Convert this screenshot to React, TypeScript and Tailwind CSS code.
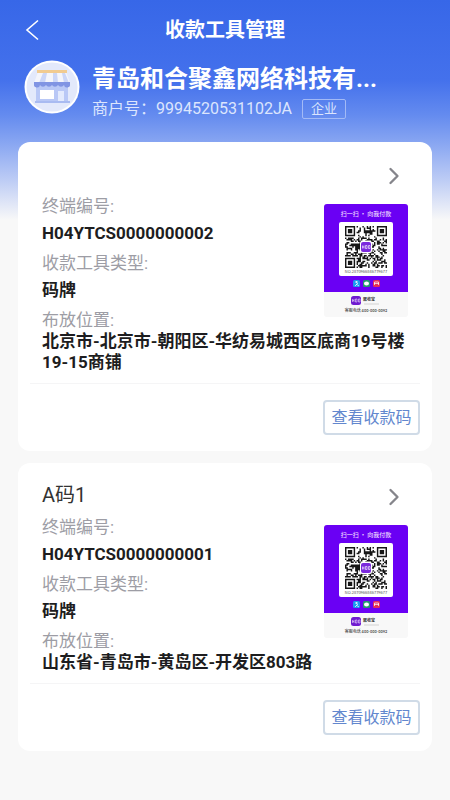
import { ChevronRight } from "lucide-react";

interface Tool {
  name: string;
  terminalNo: string;
  type: string;
  location: string;
}

const tools: Tool[] = [
  {
    name: "",
    terminalNo: "H04YTCS0000000002",
    type: "码牌",
    location: "北京市-北京市-朝阳区-华纺易城西区底商19号楼19-15商铺",
  },
  {
    name: "A码1",
    terminalNo: "H04YTCS0000000001",
    type: "码牌",
    location: "山东省-青岛市-黄岛区-开发区803路",
  },
];

const QR_SIZE = 29;

const finderAt = (x: number, y: number, left: number, top: number) => {
  const dx = x - left;
  const dy = y - top;
  if (dx < -1 || dy < -1 || dx > 7 || dy > 7) return null;
  const ring = Math.max(Math.abs(dx - 3), Math.abs(dy - 3));
  return ring === 3 || ring <= 1;
};

const isDark = (x: number, y: number) => {
  const finder =
    finderAt(x, y, 0, 0) ??
    finderAt(x, y, QR_SIZE - 7, 0) ??
    finderAt(x, y, 0, QR_SIZE - 7);
  if (finder !== null) return finder;
  const n = Math.sin(x * 12.9898 + y * 78.233) * 43758.5453;
  return n - Math.floor(n) < 0.52;
};

const qrPath = Array.from({ length: QR_SIZE * QR_SIZE }, (_, i) => {
  const x = i % QR_SIZE;
  const y = Math.floor(i / QR_SIZE);
  return isDark(x, y) ? `M${x} ${y}h1v1h-1z` : "";
}).join("");

function ShopLogo() {
  return (
    <svg viewBox="0 0 56 54" className="h-[54px] w-14 shrink-0" aria-hidden="true">
      <ellipse cx="28" cy="27" rx="27.5" ry="26.5" fill="#ffffff" />
      <ellipse cx="28" cy="27" rx="25.5" ry="24.5" fill="#e3e9fb" />
      <rect x="12" y="24" width="32" height="18" fill="#b9c8f6" />
      <rect x="11" y="41" width="35" height="2" fill="#a9bbf1" />
      <rect x="16" y="30" width="14" height="9" fill="#ffffff" />
      <rect x="34" y="31" width="6" height="10" fill="#e3eafd" />
      <path d="M14 12h28l4 11H10z" fill="#f4f5fb" />
      <path d="M19 13h4l-2 10h-6zM29 13h4l1 10h-5zM38 13h3l4 10h-5z" fill="#cbd6f8" />
      <path d="M13 10h30v3H13z" fill="#f1cb91" />
      <path
        d="M10 22h36v2a3 3 0 0 1-6 1 3.5 3.5 0 0 1-6 0 3.5 3.5 0 0 1-6 0 3.5 3.5 0 0 1-6 0 3.5 3.5 0 0 1-6 0 3 3 0 0 1-6-1z"
        fill="#8094e3"
      />
    </svg>
  );
}

function Poster() {
  return (
    <svg
      viewBox="0 0 84 113"
      className="mt-2.5 h-[113px] w-[84px] shrink-0 font-['Noto_Sans_CJK_SC',sans-serif]"
      role="img"
      aria-label="收款码"
    >
      <rect width="84" height="113" rx="3" fill="#f8f8f8" />
      <path d="M3 0h78a3 3 0 0 1 3 3v85H0V3a3 3 0 0 1 3-3z" fill="#6a00f4" />
      <text x="42" y="12" textAnchor="middle" fontSize="6" fontWeight="500" fill="#ecdcff">
        扫一扫 · 向我付款
      </text>
      <rect x="15" y="18" width="54" height="54" rx="2" fill="#ffffff" />
      <g transform="translate(21 22) scale(1.448)">
        <path d={qrPath} fill="#161616" />
      </g>
      <rect x="36" y="37" width="12" height="12" rx="2" fill="#ffffff" />
      <rect x="37" y="38" width="10" height="10" rx="2" fill="#7a28dd" />
      <path
        d="M38.5 41.5v3M38.5 43h1.500M40 41.500v3M41.500 41.500v3h1.500v-3h-1.500M44.500 41.500v3h1.500v-3h-1.500"
        stroke="#ffffff"
        strokeWidth="0.6"
        fill="none"
      />
      <text x="42" y="69" textAnchor="middle" fontSize="4" fill="#555555">
        NO.2870966846779677
      </text>
      <rect x="29" y="76" width="7" height="7" rx="1.5" fill="#1a9bf0" />
      <path d="M31 78h3M32.5 77v2M31 82l3-3M32 80l3 2" stroke="#ffffff" strokeWidth="0.7" />
      <rect x="39" y="76" width="7" height="7" rx="1.5" fill="#249a6e" />
      <ellipse cx="42.5" cy="79.5" rx="2.5" ry="2" fill="#ffffff" />
      <rect x="49" y="76" width="7" height="7" rx="1.5" fill="#e52f56" />
      <path d="M50.5 81v-3h4v3M50 79.5h5" stroke="#ffffff" strokeWidth="0.7" fill="none" />
      <rect x="27" y="92" width="10" height="9" rx="2.5" fill="#6f1bd0" />
      <path
        d="M28.5 95v3M28.5 96.5h1.5M30 95v3M31.5 95v3h1.5v-3h-1.5M34.5 95v3h1.500v-3h-1.500"
        stroke="#e9dcfb"
        strokeWidth="0.6"
        fill="none"
      />
      <text x="39" y="97" fontSize="4" fontWeight="700" fill="#333333">
        聚收宝
      </text>
      <path d="M40 100h15" stroke="#c8c8c8" strokeWidth="0.8" />
      <text x="42" y="108" textAnchor="middle" fontSize="4" fontWeight="500" fill="#444444">
        客服电话 400-000-0092
      </text>
    </svg>
  );
}

function ToolCard({ tool }: { tool: Tool }) {
  return (
    <section className="rounded-xl bg-white pt-[18px] pb-4">
      <div className="flex h-[34px] items-start justify-between px-6">
        <h2 className="text-xl leading-7 text-[#333333]">{tool.name}</h2>
        <button type="button" aria-label="详情" className="pt-0.5">
          <ChevronRight className="size-7 text-[#85858b]" strokeWidth={2} />
        </button>
      </div>
      <div className="flex items-start justify-between px-6">
        <dl className="text-[17px] text-[#9d9da5] [&>dd]:font-bold [&>dd]:text-[#1d1d20]">
          <dt className="leading-[25px]">终端编号:</dt>
          <dd className="mb-1 leading-7">{tool.terminalNo}</dd>
          <dt className="leading-[25px]">收款工具类型:</dt>
          <dd className="mb-1 leading-7">{tool.type}</dd>
          <dt className="h-[23px] leading-[25px]">布放位置:</dt>
        </dl>
        <Poster />
      </div>
      <p className="px-6 text-[17px] leading-[21px] font-bold text-[#1d1d20]">{tool.location}</p>
      <div className="mx-3 mt-2.5 flex justify-end border-t border-[#f5f5f6] pt-4">
        <button
          type="button"
          className="h-[35px] w-[97px] rounded border-2 border-[#d0dbe7] text-base text-[#6287ce]"
        >
          查看收款码
        </button>
      </div>
    </section>
  );
}

export default function App() {
  return (
    <div className="min-h-screen bg-[#f8f8f8] font-[Roboto,'Noto_Sans_CJK_SC',sans-serif]">
      <div className="bg-[linear-gradient(#3767e8_0px,#4471ec_80px,#648bef_115px,#8ba8f2_145px,#bdccf5_180px,#f8f8f8_220px)] bg-no-repeat pb-10">
        <header className="grid h-[60px] grid-cols-[60px_1fr_60px] items-center">
          <button type="button" aria-label="返回" className="ml-6">
            <svg viewBox="0 0 16 22" className="h-[22px] w-4" fill="none" stroke="#ffffff" strokeWidth="1.6">
              <path d="M14 1.500L3 11l11 9.500" />
            </svg>
          </button>
          <h1 className="text-center text-xl font-bold text-white">收款工具管理</h1>
        </header>
        <div className="flex items-start gap-3 px-6">
          <ShopLogo />
          <div className="text-white">
            <p className="text-2xl leading-[38px] font-bold">青岛和合聚鑫网络科技有...</p>
            <div className="flex items-center gap-2.5 text-base leading-[22px] text-[#dce5fd]">
              <span>商户号：9994520531102JA</span>
              <span className="rounded-xs border border-[#a3baf6] px-2 text-[13px] leading-[18px]">企业</span>
            </div>
          </div>
        </div>
        <main className="mt-[22px] flex flex-col gap-3 px-[18px]">
          {tools.map((tool) => (
            <ToolCard key={tool.terminalNo} tool={tool} />
          ))}
        </main>
      </div>
    </div>
  );
}
